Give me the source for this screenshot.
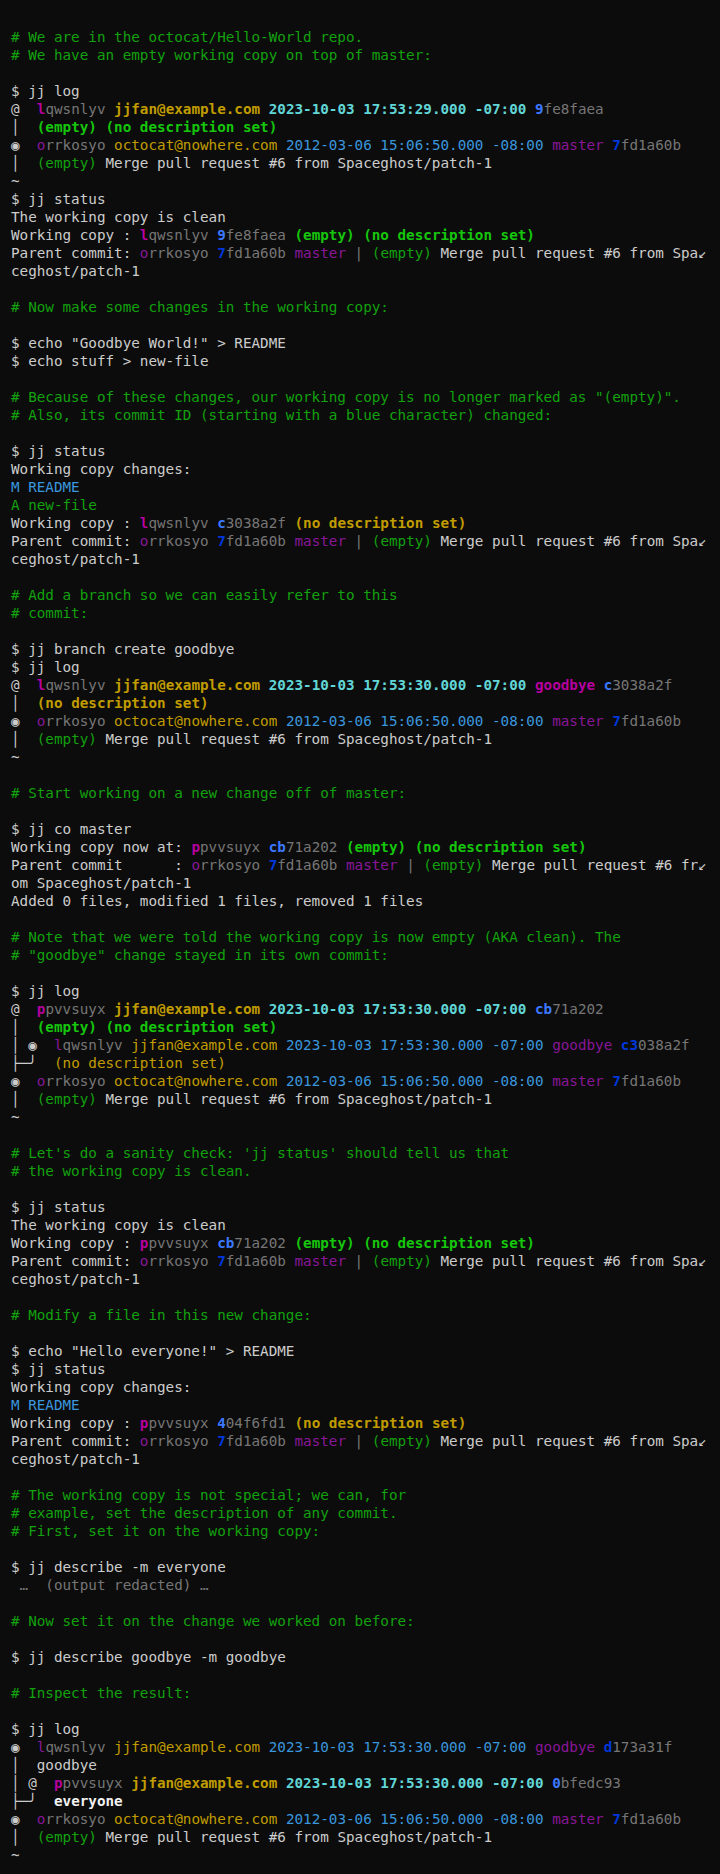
import React from 'react';

// Campbell-ish terminal palette
const C: Record<string, string> = {
  t: 'text-[#cccccc]',
  c: 'text-[#13a10e]',
  g: 'text-[#13a10e]',
  G: 'font-bold text-[#16c60c]',
  d: 'text-[#767676]',
  m: 'text-[#881798]',
  M: 'font-bold text-[#b4009e]',
  y: 'text-[#c19c00]',
  Y: 'font-bold text-[#c19c00]',
  b: 'text-[#3a96dd]',
  B: 'font-bold text-[#61d6d6]',
  i: 'font-bold text-[#0037da]',
  I: 'font-bold text-[#3b78ff]',
  W: 'font-bold text-[#f2f2f2]',
};

type Seg = [string, string];
type Line = Seg[];

const cm = (s: string): Line => [['c', s]];
const tx = (s: string): Line => [['t', s]];
const blank: Line = [];

const origin: Line = [
  ['t', '◉  '], ['m', 'o'], ['d', 'rrkosyo '], ['y', 'octocat@nowhere.com '],
  ['b', '2012-03-06 15:06:50.000 -08:00 '], ['m', 'master '], ['i', '7'], ['d', 'fd1a60b'],
];
const originDesc: Line = [['t', '│  '], ['g', '(empty)'], ['t', ' Merge pull request #6 from Spaceghost/patch-1']];
const parent: Line = [
  ['t', 'Parent commit: '], ['m', 'o'], ['d', 'rrkosyo '], ['i', '7'], ['d', 'fd1a60b '],
  ['m', 'master'], ['d', ' | '], ['g', '(empty)'], ['t', ' Merge pull request #6 from Spa↙'],
];
const wrapTail = tx('ceghost/patch-1');

const LINES: Line[] = [
  cm('# We are in the octocat/Hello-World repo.'),
  cm('# We have an empty working copy on top of master:'),
  blank,
  tx('$ jj log'),
  [['t', '@  '], ['M', 'l'], ['d', 'qwsnlyv '], ['Y', 'jjfan@example.com '], ['B', '2023-10-03 17:53:29.000 -07:00 '], ['I', '9'], ['d', 'fe8faea']],
  [['t', '│  '], ['G', '(empty) (no description set)']],
  origin,
  originDesc,
  tx('~'),
  tx('$ jj status'),
  tx('The working copy is clean'),
  [['t', 'Working copy : '], ['M', 'l'], ['d', 'qwsnlyv '], ['I', '9'], ['d', 'fe8faea '], ['G', '(empty) (no description set)']],
  parent,
  wrapTail,
  blank,
  cm('# Now make some changes in the working copy:'),
  blank,
  tx('$ echo "Goodbye World!" > README'),
  tx('$ echo stuff > new-file'),
  blank,
  cm('# Because of these changes, our working copy is no longer marked as "(empty)".'),
  cm('# Also, its commit ID (starting with a blue character) changed:'),
  blank,
  tx('$ jj status'),
  tx('Working copy changes:'),
  [['b', 'M README']],
  [['g', 'A new-file']],
  [['t', 'Working copy : '], ['M', 'l'], ['d', 'qwsnlyv '], ['I', 'c'], ['d', '3038a2f '], ['Y', '(no description set)']],
  parent,
  wrapTail,
  blank,
  cm('# Add a branch so we can easily refer to this'),
  cm('# commit:'),
  blank,
  tx('$ jj branch create goodbye'),
  tx('$ jj log'),
  [['t', '@  '], ['M', 'l'], ['d', 'qwsnlyv '], ['Y', 'jjfan@example.com '], ['B', '2023-10-03 17:53:30.000 -07:00 '], ['M', 'goodbye '], ['I', 'c'], ['d', '3038a2f']],
  [['t', '│  '], ['Y', '(no description set)']],
  origin,
  originDesc,
  tx('~'),
  blank,
  cm('# Start working on a new change off of master:'),
  blank,
  tx('$ jj co master'),
  [['t', 'Working copy now at: '], ['M', 'p'], ['d', 'pvvsuyx '], ['I', 'cb'], ['d', '71a202 '], ['G', '(empty) (no description set)']],
  [['t', 'Parent commit      : '], ['m', 'o'], ['d', 'rrkosyo '], ['i', '7'], ['d', 'fd1a60b '], ['m', 'master'], ['d', ' | '], ['g', '(empty)'], ['t', ' Merge pull request #6 fr↙']],
  tx('om Spaceghost/patch-1'),
  tx('Added 0 files, modified 1 files, removed 1 files'),
  blank,
  cm('# Note that we were told the working copy is now empty (AKA clean). The'),
  cm('# "goodbye" change stayed in its own commit:'),
  blank,
  tx('$ jj log'),
  [['t', '@  '], ['M', 'p'], ['d', 'pvvsuyx '], ['Y', 'jjfan@example.com '], ['B', '2023-10-03 17:53:30.000 -07:00 '], ['I', 'cb'], ['d', '71a202']],
  [['t', '│  '], ['G', '(empty) (no description set)']],
  [['t', '│ ◉  '], ['m', 'l'], ['d', 'qwsnlyv '], ['y', 'jjfan@example.com '], ['b', '2023-10-03 17:53:30.000 -07:00 '], ['m', 'goodbye '], ['i', 'c3'], ['d', '038a2f']],
  [['t', '├─╯  '], ['y', '(no description set)']],
  origin,
  originDesc,
  tx('~'),
  blank,
  cm("# Let's do a sanity check: 'jj status' should tell us that"),
  cm('# the working copy is clean.'),
  blank,
  tx('$ jj status'),
  tx('The working copy is clean'),
  [['t', 'Working copy : '], ['M', 'p'], ['d', 'pvvsuyx '], ['I', 'cb'], ['d', '71a202 '], ['G', '(empty) (no description set)']],
  parent,
  wrapTail,
  blank,
  cm('# Modify a file in this new change:'),
  blank,
  tx('$ echo "Hello everyone!" > README'),
  tx('$ jj status'),
  tx('Working copy changes:'),
  [['b', 'M README']],
  [['t', 'Working copy : '], ['M', 'p'], ['d', 'pvvsuyx '], ['I', '4'], ['d', '04f6fd1 '], ['Y', '(no description set)']],
  parent,
  wrapTail,
  blank,
  cm('# The working copy is not special; we can, for'),
  cm('# example, set the description of any commit.'),
  cm('# First, set it on the working copy:'),
  blank,
  tx('$ jj describe -m everyone'),
  [['d', ' …  (output redacted) …']],
  blank,
  cm('# Now set it on the change we worked on before:'),
  blank,
  tx('$ jj describe goodbye -m goodbye'),
  blank,
  cm('# Inspect the result:'),
  blank,
  tx('$ jj log'),
  [['t', '◉  '], ['m', 'l'], ['d', 'qwsnlyv '], ['y', 'jjfan@example.com '], ['b', '2023-10-03 17:53:30.000 -07:00 '], ['m', 'goodbye '], ['i', 'd'], ['d', '173a31f']],
  [['t', '│  goodbye']],
  [['t', '│ @  '], ['M', 'p'], ['d', 'pvvsuyx '], ['Y', 'jjfan@example.com '], ['B', '2023-10-03 17:53:30.000 -07:00 '], ['I', '0'], ['d', 'bfedc93']],
  [['t', '├─╯  '], ['W', 'everyone']],
  origin,
  originDesc,
  tx('~'),
];

export default function App() {
  return (
    <div className="min-h-[1874px] w-[720px] bg-[#0c0c0c] pt-[28px] pb-[10px] pl-[11px] text-[#cccccc] font-['DejaVu_Sans_Mono',monospace] text-[14.27px] leading-[18px]">
      {LINES.map((line, n) => (
        <div key={n} className="h-[18px] whitespace-pre">
          {line.map(([k, s], j) => (
            <span key={j} className={C[k]}>{s}</span>
          ))}
        </div>
      ))}
    </div>
  );
}
